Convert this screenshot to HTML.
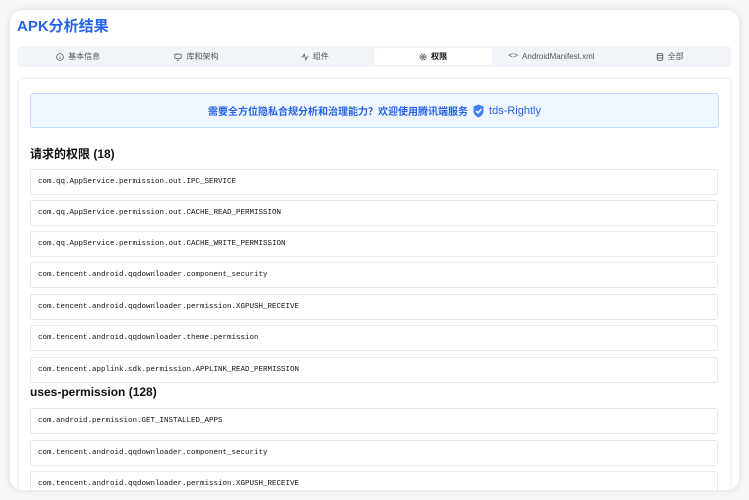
<!DOCTYPE html>
<html><head><meta charset="utf-8"><style>
*{box-sizing:border-box;margin:0;padding:0}
body{width:749px;height:500px;background:#f7f7f7;font-family:"Liberation Sans","Noto Sans CJK SC",sans-serif;overflow:hidden;position:relative}
.card{position:absolute;left:10px;top:10px;width:729px;height:480px;background:#fff;border-radius:12px;box-shadow:0 0 8px rgba(0,0,0,.12);overflow:hidden}
.title{position:absolute;left:7px;top:5px;font-size:15px;font-weight:bold;color:#2563eb}
.tabs{position:absolute;left:7px;top:36px;width:714px;height:21px;background:#f1f5f9;border-radius:4px;display:flex;padding:2px}
.tab{flex:1;display:flex;align-items:center;justify-content:center;font-size:8px;color:#555;gap:4px}
.tab.act{background:#fff;color:#111;font-weight:bold;border-radius:3px}
.panel{position:absolute;left:8px;top:68px;width:713px;height:420px;border:1px solid #f0f0f0;box-shadow:0 0 3px rgba(0,0,0,.06);border-radius:4px}
.banner{position:absolute;left:20px;top:83px;width:689px;height:35px;background:#eff6ff;border:1px solid #bfdbfe;border-radius:3px;display:flex;align-items:center;justify-content:center;font-size:10px;font-weight:bold;color:#2563eb;gap:4px}
h3{position:absolute;left:20px;font-size:12px;font-weight:bold;color:#111}
.item{position:absolute;left:20px;width:688px;height:26px;border:1px solid #e5e7eb;border-radius:3px;font-family:"Liberation Mono",monospace;font-size:7.5px;color:#111;padding-left:7px;line-height:25px;background:#fff}
</style></head><body>
<div class="card">
<div class="title">APK分析结果</div>
<div class="tabs">
<div class="tab"><svg width="8" height="8" viewBox="0 0 10 10"><circle cx="5" cy="5" r="4.2" fill="none" stroke="#555"/><path d="M5 4.5v3M5 3v.3" stroke="#555"/></svg>基本信息</div>
<div class="tab"><svg width="8" height="8" viewBox="0 0 10 10"><rect x="1" y="1.5" width="8" height="5.5" rx="1" fill="none" stroke="#555"/><path d="M3.5 9h3" stroke="#555"/></svg>库和架构</div>
<div class="tab"><svg width="8" height="8" viewBox="0 0 10 10"><path d="M0.5 5h2l1.5-3.5 2 7 1.5-3.5h2" fill="none" stroke="#555"/></svg>组件</div>
<div class="tab act"><svg width="8" height="8" viewBox="0 0 10 10"><circle cx="5" cy="5" r="3.8" fill="none" stroke="#222" stroke-dasharray="2 1"/><circle cx="5" cy="5" r="1.5" fill="none" stroke="#222"/></svg>权限</div>
<div class="tab"><span style="font-family:'Liberation Mono'">&lt;&gt;</span>AndroidManifest.xml</div>
<div class="tab"><svg width="8" height="8" viewBox="0 0 10 10"><ellipse cx="5" cy="2" rx="3.5" ry="1.3" fill="none" stroke="#555"/><path d="M1.5 2v6c0 1.7 7 1.7 7 0V2M1.5 5c0 1.7 7 1.7 7 0" fill="none" stroke="#555"/></svg>全部</div>
</div>
<div class="panel"></div>
<div class="banner">需要全方位隐私合规分析和治理能力？欢迎使用腾讯端服务 <svg width="13" height="14" viewBox="0 0 12 14"><path d="M6 0.5L11 2.5V7c0 3-2.5 5.5-5 6.5C3.5 12.5 1 10 1 7V2.5z" fill="#3b82f6"/><path d="M3.5 7l2 2 3.5-4" fill="none" stroke="#fff" stroke-width="1.5"/></svg><span style="font-weight:normal;font-size:11px">tds-Rightly</span></div>
<h3 style="top:135px">请求的权限 (18)</h3>
<div class="item" style="top:159px">com.qq.AppService.permission.out.IPC_SERVICE</div>
<div class="item" style="top:190px">com.qq.AppService.permission.out.CACHE_READ_PERMISSION</div>
<div class="item" style="top:221px">com.qq.AppService.permission.out.CACHE_WRITE_PERMISSION</div>
<div class="item" style="top:252px">com.tencent.android.qqdownloader.component_security</div>
<div class="item" style="top:284px">com.tencent.android.qqdownloader.permission.XGPUSH_RECEIVE</div>
<div class="item" style="top:315px">com.tencent.android.qqdownloader.theme.permission</div>
<div class="item" style="top:347px">com.tencent.applink.sdk.permission.APPLINK_READ_PERMISSION</div>
<h3 style="top:375px">uses-permission (128)</h3>
<div class="item" style="top:398px">com.android.permission.GET_INSTALLED_APPS</div>
<div class="item" style="top:430px">com.tencent.android.qqdownloader.component_security</div>
<div class="item" style="top:461px">com.tencent.android.qqdownloader.permission.XGPUSH_RECEIVE</div>
</div>
</body></html>
